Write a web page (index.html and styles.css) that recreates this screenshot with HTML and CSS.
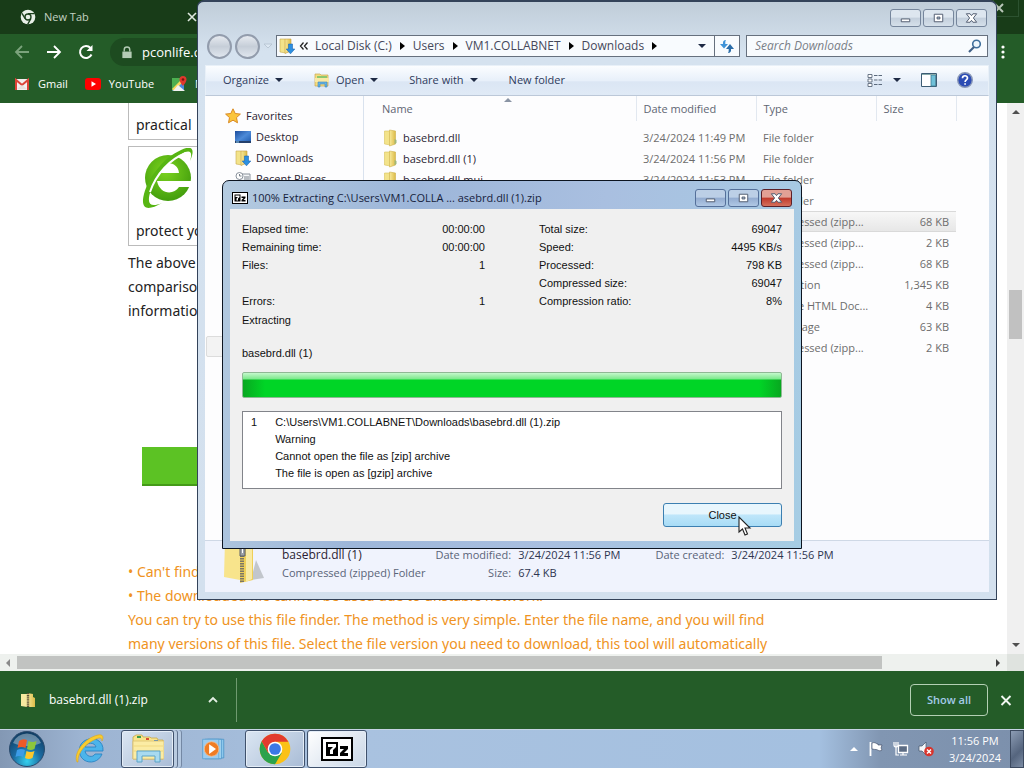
FILE: index.html
```
<!DOCTYPE html>
<html lang="en">
<head>
<meta charset="utf-8">
<title>Desktop</title>
<link rel="stylesheet" href="styles.css">
</head>
<body>
<svg class="defs" aria-hidden="true">
  <defs>
    <linearGradient id="gold" x1="0" x2="1"><stop offset="0" stop-color="#f8ea9c"/><stop offset="1" stop-color="#dcbb48"/></linearGradient>
    <linearGradient id="screen" x1="0" y1="0" x2="1" y2="1"><stop offset="0" stop-color="#1c4c9c"/><stop offset=".5" stop-color="#4c8ad8"/><stop offset="1" stop-color="#1d58ac"/></linearGradient>
    <radialGradient id="orb" cx=".5" cy=".85" r=".9"><stop offset="0" stop-color="#35d0ee"/><stop offset=".45" stop-color="#1b6aa0"/><stop offset="1" stop-color="#0d3558"/></radialGradient>
    <radialGradient id="lime" cx=".45" cy=".35" r=".7"><stop offset="0" stop-color="#7cd41e"/><stop offset="1" stop-color="#3f9a0c"/></radialGradient>
    <symbol id="folder" viewBox="0 0 16 18">
      <path d="M2 2h5l1 1v13l-6-1z" fill="#f3e38a" stroke="#d9c25c" stroke-width=".6"/>
      <path d="M7 1l6 1v13l-6 2z" fill="url(#gold)" stroke="#cdb04a" stroke-width=".6"/>
      <path d="M12 10l2 1v3l-2 1z" fill="#9fb87a"/>
    </symbol>
    <symbol id="downloads" viewBox="0 0 16 16">
      <path d="M1 1h5l1 1v13l-6-1z" fill="#f3e38a" stroke="#c9ab4c" stroke-width=".6"/>
      <path d="M6 1l6 0v12l-6 2.500z" fill="url(#gold)" stroke="#c9a040" stroke-width=".6"/>
      <path d="M9.500 6h4v5h2.300l-4.300 4.800L7.200 11h2.300z" fill="#2c8fe0" stroke="#1c66b4" stroke-width=".6"/>
    </symbol>
    <symbol id="zip" viewBox="0 0 16 16">
      <path d="M1 2h6v13l-6-1z" fill="#f7e9a0"/>
      <path d="M7 1l6 1v3l2 1v9H7z" fill="url(#gold)"/>
      <path d="M8 1v14" stroke="#5c5138" stroke-width="2.400" stroke-dasharray="1.300 .8"/>
    </symbol>
    <symbol id="sevenzip" viewBox="0 0 32 24">
      <path d="M0 0h32v24H0z"/>
      <path d="M2 2h28v20H2z" fill="#fff"/>
      <path d="M5 5h12v14H5z"/>
      <path d="M7 7h8v3l-3 3v4H9v-4l3-3H7z" fill="#fff"/>
      <path d="M19 9h8v3l-4 4h4v3h-8v-3l4-4h-4z"/>
    </symbol>
    <symbol id="min" viewBox="0 0 30 17"><path d="M10.500 9.500h9v3h-9z" fill="#fff" stroke="#4c586c"/></symbol>
    <symbol id="max" viewBox="0 0 30 17"><path d="M10.500 4.500h9v8h-9z" fill="#fff" stroke="#4c586c"/><path d="M13.500 7.500h3v2h-3z" fill="#b8c8da" stroke="#4c586c"/></symbol>
    <symbol id="shut" viewBox="0 0 30 17"><path d="M9.500 4h4L15 6l1.500-2h4l-3.500 4.500 3.500 4.500h-4L15 11l-1.500 2h-4L13 8.500z" fill="#fff" stroke="#4c586c"/></symbol>
    <symbol id="chrome" viewBox="0 0 48 48">
      <circle cx="24" cy="24" r="23" fill="#fbc116"/>
      <path d="M4.100 12.500A23 23 0 0 0 24 47l10-17-10-6-10 6z" fill="#2ba24c"/>
      <path d="M24 13h20a23 23 0 0 0-40-.5L14 30z" fill="#e23b2e"/>
      <circle cx="24" cy="24" r="11" fill="#fff"/><circle cx="24" cy="24" r="8.800" fill="#3b78e7"/>
    </symbol>
  </defs>
</svg>

<div class="desktop">
  <main class="browser">
    <header class="tabs">
      <div class="tab">
        <svg class="i16" viewBox="0 0 48 48"><circle cx="24" cy="24" r="22" fill="#e8f0e8"/><circle cx="24" cy="24" r="9" fill="none" stroke="#1c401d" stroke-width="4"/><path d="M24 14h20M15.500 29L6 13M32.500 29L23 46" stroke="#1c401d" stroke-width="4"/></svg>
        <span>New Tab</span>
        <button class="plain" aria-label="Close tab"><svg class="i10" viewBox="0 0 10 10"><path d="M1 1l8 8M9 1L1 9" stroke="#dfe8df" stroke-width="1.600"/></svg></button>
      </div>
      <button class="plain quit" aria-label="Close browser"><svg class="i10" viewBox="0 0 10 10"><path d="M1 1l8 8M9 1L1 9" stroke="#b9c6b9" stroke-width="2"/></svg></button>
    </header>
    <div class="toolbar">
      <button class="plain" aria-label="Back"><svg class="i16" viewBox="0 0 16 16"><path d="M15 8H2M8 2L2 8l6 6" fill="none" stroke="#7ba37c" stroke-width="1.800"/></svg></button>
      <button class="plain" aria-label="Forward"><svg class="i16" viewBox="0 0 16 16"><path d="M1 8h13M8 2l6 6-6 6" fill="none" stroke="#fff" stroke-width="1.800"/></svg></button>
      <button class="plain" aria-label="Reload"><svg class="i16" viewBox="0 0 16 16"><path d="M13.500 10.500A6 6 0 1 1 12.500 4" fill="none" stroke="#fff" stroke-width="2"/><path d="M14.500 1v6h-6z" fill="#fff"/></svg></button>
      <div class="omnibox">
        <svg class="i12" viewBox="0 0 12 14"><path d="M3 6V4a3 3 0 0 1 6 0v2" fill="none" stroke="#b4cbb5" stroke-width="1.500"/><path d="M1 6h10v7H1z" fill="#b4cbb5"/></svg>
        <input type="text" aria-label="Address" value="pconlife.com">
      </div>
      <button class="plain kebab" aria-label="Menu"><svg viewBox="0 0 4 14"><circle cx="2" cy="2" r="1.600"/><circle cx="2" cy="7" r="1.600"/><circle cx="2" cy="12" r="1.600"/></svg></button>
    </div>
    <nav class="bookmarks">
      <a href="#"><svg class="i16" viewBox="0 0 16 16"><path d="M1 3h14v11H1z" fill="#f4efee"/><path d="M2 14V4l6 5 6-5v10" fill="none" stroke="#dc4437" stroke-width="2"/><path d="M3 13l5-4 5 4z" fill="#e8e0dd"/></svg>Gmail</a>
      <a href="#"><svg class="i16" viewBox="0 0 16 16"><rect y="2" width="16" height="12" rx="3" fill="#f00"/><path d="M6.500 5.200L11 8l-4.500 2.800z" fill="#fff"/></svg>YouTube</a>
      <a href="#"><svg class="i16" viewBox="0 0 16 16"><path d="M1 2h12v13H1z" fill="#4caf50"/><path d="M1 15L13 3v12z" fill="#4a89dc"/><path d="M1 13L12 2l2 2L3 15z" fill="#f8d75c"/><path d="M7 9l7 6H2z" fill="#f2f2f2"/><path d="M12 0a3.500 3.500 0 0 1 3.500 3.500C15.500 6 12 10 12 10S8.500 6 8.500 3.500A3.500 3.500 0 0 1 12 0z" fill="#e0382c"/><circle cx="12" cy="3.500" r="1.300" fill="#7c1510"/></svg>Maps</a>
    </nav>
    <div class="view">
      <article class="page">
        <div class="card first">practical</div>
        <div class="card">
          <svg class="logo" viewBox="0 0 52 60">
            <circle cx="26" cy="30" r="23" fill="url(#lime)"/>
            <path d="M15 25c2-13 21-13 22 0z" fill="#fff"/>
            <path d="M15 33h35v6H37c-5 8-19 8-22-6z" fill="#fff"/>
            <path d="M2 46C-2 62 6 63 20 55 8 60 4 56 9 42 17 22 33 9 43 4c7-2 7 2 5 9C54 0 49-3 39 2 21 10 7 29 2 46z" fill="#57b513"/>
            <path d="M8 44C14 26 28 11 44 5" fill="none" stroke="#fff" stroke-width="2"/>
          </svg>
          <span>protect your</span>
        </div>
        <p>The above<br>comparison<br>information</p>
        <div class="cta"></div>
        <p class="tips">• Can't find the file<br>• The downloaded file cannot be used due to unstable network.<br>You can try to use this file finder. The method is very simple. Enter the file name, and you will find<br>many versions of this file. Select the file version you need to download, this tool will automatically</p>
      </article>
      <div class="vscroll">
        <svg class="i10" viewBox="0 0 10 10"><path d="M1 7l4-4 4 4z" fill="#505050"/></svg>
        <div class="vtrack"><div class="vthumb"></div></div>
        <svg class="i10" viewBox="0 0 10 10"><path d="M1 3l4 4 4-4z" fill="#505050"/></svg>
      </div>
    </div>
    <div class="hscroll">
      <svg class="i10" viewBox="0 0 10 10"><path d="M7 1L3 5l4 4z" fill="#8a8a8a"/></svg>
      <div class="htrack"><div class="hthumb"></div></div>
      <svg class="i10" viewBox="0 0 10 10"><path d="M3 1l4 4-4 4z" fill="#404040"/></svg>
      <div class="corner"></div>
    </div>
    <footer class="shelf">
      <button class="plain item">
        <svg class="i16"><use href="#zip"/></svg>
        <span>basebrd.dll (1).zip</span>
        <svg class="i10" viewBox="0 0 10 10"><path d="M1 7l4-4 4 4" fill="none" stroke="#e4efe4" stroke-width="1.800"/></svg>
      </button>
      <button class="showall">Show all</button>
      <button class="plain" aria-label="Close downloads bar"><svg class="i12" viewBox="0 0 12 12"><path d="M1.500 1.500l9 9M10.500 1.500l-9 9" stroke="#f2f7f2" stroke-width="1.900"/></svg></button>
    </footer>
  </main>

  <section class="explorer" aria-label="Downloads">
    <div class="caption">
      <button aria-label="Minimize"><svg><use href="#min"/></svg></button>
      <button aria-label="Maximize"><svg><use href="#max"/></svg></button>
      <button aria-label="Close"><svg><use href="#shut"/></svg></button>
    </div>
    <div class="navrow">
      <button class="round" aria-label="Back"></button>
      <button class="round" aria-label="Forward"></button>
      <svg class="i10" viewBox="0 0 10 10"><path d="M1 3h8L5 7z" fill="#dde8f3" stroke="#b3c0ce" stroke-width=".8"/></svg>
      <div class="crumbs">
        <svg class="i16"><use href="#downloads"/></svg>
        <svg class="i10" viewBox="0 0 10 10"><path d="M4.500 1.500L1.500 5l3 3.500M8.500 1.500L5.500 5l3 3.500" fill="none" stroke="#222" stroke-width="1.300"/></svg>
        <a href="#">Local Disk (C:)</a><i></i>
        <a href="#">Users</a><i></i>
        <a href="#">VM1.COLLABNET</a><i></i>
        <a href="#">Downloads</a><i></i>
        <b class="down"></b>
        <button class="refresh" aria-label="Refresh"><svg class="i16" viewBox="0 0 16 16"><path d="M6.500 2C3.500 2.500 4 5 4 6H1l4 4.500L9 6H6.300c0-2 0-3 .7-4z" fill="#3f93d8"/><path d="M9.500 15c3-.5 2.500-3 2.500-4h3L11 6l-4 5h2.700c0 2 0 3-.7 4z" fill="#2a6ca8"/></svg></button>
      </div>
      <div class="search">
        <input type="text" aria-label="Search" placeholder="Search Downloads">
        <svg class="i14" viewBox="0 0 14 14"><circle cx="8.500" cy="5" r="3.800" fill="#eef6fc" stroke="#3f6f9c" stroke-width="1.600"/><path d="M6 8l-5 5" stroke="#3f5f86" stroke-width="2.200"/></svg>
      </div>
    </div>
    <div class="commands">
      <button>Organize<b class="down"></b></button>
      <button><svg class="i16" viewBox="0 0 16 16"><path d="M1 2h5l1 1h7v11H1z" fill="#f5dd80" stroke="#c9a850" stroke-width=".7"/><path d="M3 4h10v4H3z" fill="#8cc870"/><path d="M1 6h14v4H1z" fill="#f9e9a4"/><path d="M4 15v-5h9v5h-2v-3H6v3z" fill="#64b4e4" stroke="#3c84b8" stroke-width=".6"/></svg>Open<b class="down"></b></button>
      <button>Share with<b class="down"></b></button>
      <button>New folder</button>
      <button class="views" aria-label="Change view"><svg class="i16" viewBox="0 0 16 14"><path d="M1 1.500h4v3H1zM1 6h4v3H1zM1 10.500h4v3H1z" fill="#fff" stroke="#5c6a7c" stroke-width=".9"/><path d="M7 2.500h9M7 7h9M7 11.500h9" stroke="#5c6a7c" stroke-dasharray="3.500 1"/></svg><b class="down"></b></button>
      <button aria-label="Preview pane"><svg class="i16" viewBox="0 0 16 14"><path d="M.5.500h15v13H.5z" fill="#fff" stroke="#3c5c74"/><path d="M10 2h4.500v11H10z" fill="#6fc0d8" stroke="#3c7c94" stroke-width=".8"/><path d="M1 1.500h14" stroke="#8aa"/></svg></button>
      <button aria-label="Help"><svg class="i16" viewBox="0 0 16 16"><circle cx="8" cy="8" r="7.300" fill="#2c4cb4" stroke="#8a98b8" stroke-width="1.400"/><path d="M5.500 6.200C5.500 3 10.500 3 10.500 6c0 2-2.400 1.800-2.400 4M8.100 11.200v1.600" fill="none" stroke="#fff" stroke-width="1.700"/></svg></button>
    </div>
    <div class="body">
      <nav class="tree">
        <a href="#" class="root"><svg class="i16" viewBox="0 0 16 16"><path d="M8 .8l2.200 4.700 5.200.6-3.900 3.500 1 5.200L8 12.200l-4.500 2.600 1-5.200L.6 6.100l5.200-.6z" fill="#fbc53c" stroke="#d98a24"/></svg>Favorites</a>
        <a href="#"><svg class="i16" viewBox="0 0 16 16"><path d="M0 2h16v12H0z" fill="url(#screen)"/><path d="M0 12h16v2H0z" fill="#24406c"/><path d="M1 13h3" stroke="#8fd0f4"/></svg>Desktop</a>
        <a href="#"><svg class="i16"><use href="#downloads"/></svg>Downloads</a>
        <a href="#"><svg class="i16" viewBox="0 0 16 16"><path d="M5 3h10v10H5z" fill="#f4f6f8" stroke="#8a929c"/><circle cx="4.500" cy="5" r="3.500" fill="#fff" stroke="#8a929c"/><path d="M4.500 3v2h2M9 6h5M9 8h5" fill="none" stroke="#7a828c"/></svg>Recent Places</a>
        <a href="#" class="current" aria-label="Computer"></a>
      </nav>
      <div class="files">
        <table>
          <thead><tr><th class="sorted">Name</th><th>Date modified</th><th>Type</th><th>Size</th><th aria-label="Spare"></th></tr></thead>
          <tbody>
            <tr><td><svg><use href="#folder"/></svg>basebrd.dll</td><td>3/24/2024 11:49 PM</td><td>File folder</td><td></td></tr>
            <tr><td><svg><use href="#folder"/></svg>basebrd.dll (1)</td><td>3/24/2024 11:56 PM</td><td>File folder</td><td></td></tr>
            <tr><td><svg><use href="#folder"/></svg>basebrd.dll.mui</td><td>3/24/2024 11:53 PM</td><td>File folder</td><td></td></tr>
            <tr><td></td><td></td><td>File folder</td><td></td></tr>
            <tr class="picked"><td></td><td></td><td>Compressed (zipp...</td><td>68 KB</td></tr>
            <tr><td></td><td></td><td>Compressed (zipp...</td><td>2 KB</td></tr>
            <tr><td></td><td></td><td>Compressed (zipp...</td><td>68 KB</td></tr>
            <tr><td></td><td></td><td>Application</td><td>1,345 KB</td></tr>
            <tr><td></td><td></td><td>Chrome HTML Doc...</td><td>4 KB</td></tr>
            <tr><td></td><td></td><td>PNG image</td><td>63 KB</td></tr>
            <tr><td></td><td></td><td>Compressed (zipp...</td><td>2 KB</td></tr>
          </tbody>
        </table>
      </div>
    </div>
    <div class="details">
      <svg class="bigzip" viewBox="0 0 42 48">
        <path d="M28 44l13-2-8-18z" fill="#c2c6cc"/>
        <path d="M2 4l15-2v42L1 41z" fill="#f8e48c"/><path d="M17 2l13 3v39l-13 3z" fill="#efcf58"/><path d="M23 3l6 2v38l-6 3z" fill="#f9eaa4"/>
        <path d="M19 2v44" stroke="#7c7664" stroke-width="4" stroke-dasharray="1.500 1"/>
        <path d="M17 2h5v18h-5z" fill="#9ca0a6" stroke="#5c6068"/><path d="M19.500 9v8" stroke="#fff"/>
      </svg>
      <div class="what"><strong>basebrd.dll (1)</strong><span>Compressed (zipped) Folder</span></div>
      <dl><dt>Date modified:</dt><dd>3/24/2024 11:56 PM</dd><dt>Size:</dt><dd>67.4 KB</dd></dl>
      <dl><dt>Date created:</dt><dd>3/24/2024 11:56 PM</dd></dl>
    </div>
  </section>

  <section class="dialog" role="dialog" aria-labelledby="dlg">
    <div class="dtitle">
      <svg class="i16" viewBox="0 0 32 24" preserveAspectRatio="none"><use href="#sevenzip"/></svg>
      <h1 id="dlg">100% Extracting C:\Users\VM1.COLLA ... asebrd.dll (1).zip</h1>
      <div class="caption">
        <button aria-label="Minimize"><svg><use href="#min"/></svg></button>
        <button aria-label="Maximize"><svg><use href="#max"/></svg></button>
        <button class="red" aria-label="Close window"><svg><use href="#shut"/></svg></button>
      </div>
    </div>
    <div class="client">
      <div class="stats">
        <dl><dt>Elapsed time:</dt><dd>00:00:00</dd><dt>Remaining time:</dt><dd>00:00:00</dd><dt>Files:</dt><dd>1</dd><dt class="gap">Errors:</dt><dd class="gap">1</dd></dl>
        <dl><dt>Total size:</dt><dd>69047</dd><dt>Speed:</dt><dd>4495 KB/s</dd><dt>Processed:</dt><dd>798 KB</dd><dt>Compressed size:</dt><dd>69047</dd><dt>Compression ratio:</dt><dd>8%</dd></dl>
      </div>
      <p class="stage">Extracting</p>
      <p class="file" id="cur">basebrd.dll (1)</p>
      <div class="meter" role="progressbar" aria-labelledby="cur" aria-valuenow="100"></div>
      <ol class="log">
        <li><span>1</span><span>C:\Users\VM1.COLLABNET\Downloads\basebrd.dll (1).zip<br>Warning<br>Cannot open the file as [zip] archive<br>The file is open as [gzip] archive</span></li>
      </ol>
      <button class="close">Close
        <svg class="cursor" viewBox="0 0 14 20"><path d="M1 1v15l3.500-3 2.500 6 2.500-1-2.500-6h5z" fill="#fff" stroke="#222" stroke-width="1.100"/></svg>
      </button>
    </div>
  </section>

  <footer class="taskbar">
    <button class="start" aria-label="Start"><svg viewBox="0 0 36 36"><circle cx="18" cy="18" r="17.500" fill="url(#orb)" stroke="#2a4a6c"/><path d="M4 12a15 15 0 0 1 28 0c-8 4-20 4-28 0z" fill="#fff" opacity=".35"/><path d="M10 10q4-3 8-1l-1.500 8q-4-2-8 0z" fill="#ee5a28"/><path d="M19.500 10q4 2 8 0l-2 8q-4 2-7.500 0z" fill="#8cc63c"/><path d="M8 19q4-2 8 0l-2 7q-4-2-7.500 0z" fill="#3c9ce8"/><path d="M17.500 20q4 2 8 0l-2 7q-4 2-7.500 0z" fill="#fcc72c"/></svg></button>
    <button class="task ie" aria-label="Internet Explorer"><svg viewBox="0 0 32 32"><path d="M29 18H11c1 6 8 7 10 3h7c-3 8-12 10-18 6-7-5-6-17 2-20 8-4 18 1 17 11zM11 14h11c-1-5-10-5-11 0z" fill="#4cb4ea" stroke="#2a84c4" stroke-width=".9"/><path d="M3 29C-1 21 10 5 24 2c5-1 6 2 4 6 0-3-2-4-6-2C12 10 3 20 4 29z" fill="#f8cc30" stroke="#dca41c" stroke-width=".6"/></svg></button>
    <button class="task open stack" aria-label="Windows Explorer"><svg viewBox="0 0 32 32"><path d="M1 4l3-2h6l1 2h7l1 1h6l1 2h5v19H1z" fill="#f8e48c" stroke="#c8a848" stroke-width=".8"/><path d="M5 3h4v2H5z" fill="#3c9c4c"/><path d="M14 5h3v2h-3z" fill="#d84c34"/><path d="M22 7h4v2h-4z" fill="#3c80c8"/><path d="M1 8h31v18H1z" fill="#fbeca4" stroke="#dcc070" stroke-width=".8"/><path d="M1 13h30M1 18h30" stroke="#efd880"/><path d="M5 29V18h23v11h-5v-6H10v6z" fill="#a8daf0" stroke="#5ca4c8"/></svg></button>
    <button class="task wmp" aria-label="Media Player"><svg viewBox="0 0 32 32"><path d="M8 4h20v23H8z" fill="#8cc8ec" stroke="#4c94c8"/><path d="M5 4h20v24H5z" fill="#b0dcf4" stroke="#4c94c8"/><path d="M2 4h20v24H2z" fill="#9cccf0" stroke="#5ca0d0"/><circle cx="13" cy="16" r="9" fill="#f07c24" stroke="#f8c090"/><path d="M10 10l8.500 6-8.500 6z" fill="#fff"/></svg></button>
    <button class="task open" aria-label="Chrome"><svg><use href="#chrome"/></svg></button>
    <button class="task open bright" aria-label="7-Zip"><svg><use href="#sevenzip"/></svg></button>
    <div class="tray">
      <svg class="i10" viewBox="0 0 10 10"><path d="M1 7l4-4 4 4z" fill="#fff"/></svg>
      <svg class="i16" viewBox="0 0 16 16"><path d="M2.500 1v14" stroke="#fff" stroke-width="1.800"/><path d="M4 2c3-1.500 4 1 6 1v1h4l-1 3 1 2c-3 2-4-.5-6-.5S5 8 4 8z" fill="#fff" stroke="#35425c" stroke-width=".6"/></svg>
      <svg class="i16" viewBox="0 0 16 16"><path d="M5.500 4.500h9v7h-9z" fill="#5c6c84" stroke="#fff" stroke-width="1.300"/><path d="M7 14h7M10 12v2M3 6v8h3M1 1v3c0 3 4 3 4 0V1M3 1v5" fill="none" stroke="#fff" stroke-width="1.200"/></svg>
      <svg class="i16" viewBox="0 0 16 16"><path d="M1 5h3l4-4v13l-4-4H1z" fill="#f4f6f8" stroke="#44546c" stroke-width=".7"/><circle cx="11" cy="10.500" r="4.800" fill="#d8342c"/><path d="M9 8.500l4 4M13 8.500l-4 4" stroke="#fff" stroke-width="1.500"/></svg>
      <time>11:56 PM<br>3/24/2024</time>
      <button class="peek" aria-label="Show desktop"></button>
    </div>
  </footer>
</div>
</body>
</html>
```
FILE: styles.css
```
* { box-sizing: border-box; }
body { margin: 0; font: 11px/16px "Open Sans", "Noto Sans", sans-serif; color: #222; }
button, input { font: inherit; color: inherit; }
a { color: inherit; text-decoration: none; }
dl, dd, p, h1, ol { margin: 0; padding: 0; font: inherit; }
svg { flex: none; display: block; }
.defs { position: absolute; width: 0; height: 0; }
.i10 { width: 10px; height: 10px; }
.i12 { width: 12px; height: 13px; }
.i14 { width: 14px; height: 14px; }
.i16 { width: 16px; height: 16px; }
.plain { border: 0; padding: 0; background: none; display: flex; align-items: center; }
.down { border: 4px solid transparent; border-top-color: #1e2a44; border-bottom: 0; }

.desktop { position: relative; display: flex; flex-direction: column; height: 100vh; overflow: hidden; white-space: nowrap; }
.browser { flex: 1; min-height: 0; display: flex; flex-direction: column; background: #fff; color: #fff; }
.tabs { display: flex; justify-content: space-between; align-items: flex-start; height: 34px; background: #183c18; color: #c3d2c3; }
.tab { display: flex; align-items: center; gap: 8px; width: 197px; height: 34px; padding-left: 20px; }
.tab span { flex: 1; }
.quit { width: 26px; height: 17px; border: 1px solid #2c5230; border-top: 0; margin-right: 5px; }
.toolbar { display: flex; align-items: center; gap: 16px; height: 36px; padding: 0 19px 0 14px; background: #245c28; }
.omnibox { flex: 1; display: flex; align-items: center; gap: 9px; height: 28px; padding-left: 11px; border-radius: 14px; background: #1d4b20; }
.omnibox input { flex: 1; border: 0; background: none; font-size: 13px; padding: 0; }
.kebab svg { width: 4px; height: 14px; fill: #fff; }
.bookmarks { display: flex; align-items: center; gap: 17px; height: 33px; padding: 0 14px 5px; background: #245c28; }
.bookmarks a { display: flex; align-items: center; gap: 8px; }

.view { flex: 1; min-height: 0; display: flex; overflow: hidden; }
.page { flex: 1; padding-left: 128px; color: #222; font: 14px/24px "Noto Sans", sans-serif; }
.card { width: 240px; height: 100px; padding: 0 7px; border: 1px solid #bbb; display: flex; flex-direction: column; justify-content: space-between; margin-bottom: 5px; }
.card.first { height: 37px; border-top: 0; padding-top: 10px; margin-bottom: 6px; }
.card .logo { width: 52px; height: 60px; margin: 1px 0 0 6px; }
.card span { padding-bottom: 2px; }
.cta { width: 240px; height: 39px; margin: 124px 0 74px 14px; background: #5cc224; border-bottom: 2px solid #449a18; }
.tips { color: #ef9322; }
.vscroll { width: 17px; display: flex; flex-direction: column; align-items: center; gap: 4px; padding: 4px 0; background: #f0f0f0; }
.vtrack { flex: 1; width: 13px; padding-top: 169px; }
.vthumb { height: 49px; background: #c1c1c1; }
.hscroll { display: flex; align-items: center; gap: 4px; height: 17px; padding-left: 3px; background: #eef1ee; }
.htrack { flex: 1; }
.hthumb { width: 89%; height: 13px; background: #c1c3c1; }
.corner { width: 17px; height: 17px; background: #dfe3df; }
.shelf { display: flex; align-items: center; gap: 12px; height: 58px; padding-right: 12px; background: #245c28; }
.shelf .item { width: 237px; height: 44px; padding: 0 18px 0 20px; gap: 13px; border-right: 1px solid #6f9a70; text-align: left; font-size: 12px; }
.item span { flex: 1; }
.showall { margin-left: auto; width: 78px; height: 32px; border: 1px solid #b4d0b4; border-radius: 4px; background: none; color: #a4cbe8; font-weight: 600; padding: 0; }

.explorer { position: absolute; left: 197px; right: 27px; top: 0; bottom: 168px; display: flex; flex-direction: column; padding: 0 7px 7px; border: 1px solid #34435a; border-top-width: 2px; border-radius: 7px 7px 0 0; background: linear-gradient(#c0cdd9, #d5e2ef 50px, #d3e0ee); color: #45485a; }
.caption { display: flex; justify-content: flex-end; gap: 2px; }
.caption button { width: 31px; height: 18px; padding: 0; border: 1px solid #76869c; border-radius: 3px; background: linear-gradient(#dde6ef 45%, #c3cfdc 50%, #d5e0ea); }
.caption svg { width: 29px; height: 16px; }
.explorer .caption { padding: 7px 2px 7px; }
.navrow { display: flex; align-items: center; gap: 3px; height: 24px; margin-bottom: 7px; padding: 0 1px 0 2px; }
.round { width: 25px; height: 25px; flex: none; border: 2px solid #929cac; border-radius: 50%; background: linear-gradient(#e6eaf0, #c6ced8 50%, #e0e6ee); }
.crumbs { flex: 1; display: flex; align-items: center; gap: 8px; height: 22px; padding-left: 2px; border: 1px solid #66707e; background: #f8fbfe; font-size: 12px; }
.crumbs > .i16 { margin-right: -4px; }
.crumbs > .i10 { margin-right: -2px; }
.crumbs i { border: 4px solid transparent; border-left: 5px solid #000; border-right: 0; }
.crumbs b { margin-left: auto; }
.refresh { width: 25px; height: 20px; padding: 0 4px; border: 0; border-left: 1px solid #66707e; background: none; }
.search { width: 31%; display: flex; align-items: center; height: 22px; padding: 0 5px 0 8px; margin-left: 3px; border: 1px solid #66707e; background: #f8fbfe; }
.search input { flex: 1; min-width: 0; border: 0; padding: 0; background: none; font-size: 12px; font-style: italic; }
.search input::placeholder { color: #7a7f88; }
.commands { display: flex; align-items: center; gap: 31px; height: 31px; padding: 0 15px 1px 17px; border: 1px solid #e8f0f8; border-bottom-color: #bcc8d8; background: linear-gradient(#fbfdff, #e8f0fa 50%, #dbe6f4 55%, #e0eaf6); color: #2e3b5c; }
.commands button { display: flex; align-items: center; gap: 6px; padding: 0; border: 0; background: none; }
.commands .views { margin-left: auto; gap: 10px; }
.commands .views ~ button { margin-left: -11px; }
.body { flex: 1; min-height: 0; display: flex; background: #fdfdfe; }
.tree { width: 159px; padding-top: 9px; border-right: 1px solid #d9e2ee; color: #2b1d33; }
.tree a { display: flex; align-items: center; gap: 5px; height: 21px; padding-left: 30px; }
.tree a.root { padding-left: 20px; }
.tree .current { height: 21px; margin: 147px 4px 0 1px; border: 1px solid #dcdcdc; border-radius: 2px; background: #f3f3f3; }
.files { flex: 1; padding-left: 8px; overflow: hidden; }
table { width: 100%; table-layout: fixed; border-collapse: collapse; color: #6d6d6d; }
th { height: 25px; padding: 0 7px; text-align: left; font-weight: 400; color: #5f6673; border-right: 1px solid #e2e8f0; }
th:nth-child(1) { width: 264px; padding-left: 10px; }
th:nth-child(2), th:nth-child(3) { width: 120px; }
th:nth-child(4) { width: 80px; }
th:last-child { border: 0; }
.sorted { position: relative; }
.sorted::after { content: ""; position: absolute; left: 50%; top: 2px; border: 4px solid transparent; border-top: 0; border-bottom-color: #8a94a4; }
tbody::before { content: ""; display: block; height: 6px; }
td { height: 21px; padding: 0 7px; line-height: 19px; }
td:first-child { display: flex; align-items: center; gap: 4px; padding-left: 10px; color: #2b1d33; }
td svg { width: 17px; height: 18px; }
td:nth-child(4) { text-align: right; }
.picked td { background: linear-gradient(#f8f8f8, #e6e6e6); box-shadow: 0 -1px #d9d9d9 inset, 0 1px #d9d9d9 inset; }
.details { display: flex; gap: 10px; height: 52px; padding: 5px 18px; background: #f0f3fd; border-top: 1px solid #cfd8e6; color: #5a6478; line-height: 18px; }
.bigzip { width: 42px; height: 48px; margin: -10px 7px 0 0; }
.what { display: grid; align-content: start; }
.what strong { font-size: 12px; font-weight: 400; color: #2b1d33; }
.details dl { display: grid; grid-template-columns: auto auto; column-gap: 7px; margin-right: 25px; align-content: start; }
.details dt { text-align: right; }
.details dd { color: #2e3550; }

.dialog { position: absolute; left: 222px; top: 180px; width: 580px; padding: 0 7px 7px; border: 1px solid #0c1420; border-radius: 7px 7px 0 0; background: linear-gradient(100deg, #b4cbe0, #9db6d9 30%, #a9bfe0 60%, #a6cde4); color: #111; }
.dtitle { display: flex; align-items: center; gap: 4px; height: 28px; padding: 6px 2px 0 2px; color: #16223c; }
.dtitle > .i16 { height: 12px; }
.dtitle h1 { flex: 1; }
.dtitle .caption button { border-color: #55709a; background: linear-gradient(#bccfe6 45%, #93acd0 50%, #b0c8e4); }
.dtitle .caption .red { border-color: #5c2028; background: linear-gradient(#e2a095 45%, #c0392b 50%, #d4705c); }
.client { display: flex; flex-direction: column; padding: 11px 12px 14px; background: #f0f0f0; font: 11px/18px "Liberation Sans", Arial, sans-serif; }
.stats { display: grid; grid-template-columns: 1fr 1fr; column-gap: 54px; }
.stats dl { display: grid; grid-template-columns: auto auto; align-content: start; }
.stats dd { text-align: right; }
.gap { padding-top: 18px; }
.stage { margin-top: 1px; }
.file { margin: 15px 0 10px; }
.meter { height: 26px; border: 1px solid #8fb894; border-radius: 2px; background: linear-gradient(#c4f8cc, #7ce88c 6px, transparent 7px), linear-gradient(90deg, #08a820, #00d526 22px calc(100% - 22px), #08a820); }
.log { list-style: none; height: 78px; margin: 13px 0 14px; padding: 2px 8px; border: 1px solid #82848a; background: #fff; line-height: 17px; }
.log li { display: flex; gap: 18px; }
.close { position: relative; align-self: flex-end; width: 119px; height: 24px; padding: 0; border: 1px solid #3c7fb1; border-radius: 3px; background: linear-gradient(#e8f6fd 45%, #bfe6fa 50%, #a8dcf6); }
.cursor { position: absolute; left: 74px; top: 12px; width: 14px; height: 20px; }

.taskbar { display: flex; align-items: center; height: 39px; padding-left: 9px; border-top: 1px solid #c6d4e4; background: linear-gradient(90deg, #8398b4, #9db4d2 8%, #a9c2e0 35%, #a4c0e0 80%, #8196b2 86%, #7c90ac); }
.start, .task { padding: 0; border: 0; background: none; display: flex; align-items: center; justify-content: center; }
.start svg { width: 36px; height: 36px; }
.task { width: 60px; height: 38px; margin-right: 2px; border-radius: 3px; }
.task svg { width: 32px; height: 32px; }
.ie { width: 74px; padding-left: 16px; }
.open { border: 1px solid #3f516c; background: linear-gradient(135deg, #dbe6f2, #a9bcd6); box-shadow: 0 0 0 1px #e4edf7 inset; }
.stack { width: 53px; box-shadow: 0 0 0 1px #e4edf7 inset, 3px 0 #b9cbe0, 4px 0 #5f728e, 7px 0 #b4c8e0, 8px 0 #7488a4; }
.wmp { width: 67px; padding-left: 8px; }
.wmp svg { width: 28px; height: 26px; }
.bright { background: linear-gradient(135deg, #fff, #c8d6e6); }
.tray { margin-left: auto; height: 38px; display: flex; align-items: center; gap: 9px; color: #fff; }
.tray time { margin-left: 6px; text-align: center; line-height: 17px; }
.peek { width: 14px; height: 38px; padding: 0; border: 1px solid #3c4a60; background: linear-gradient(135deg, #8c9cb4, #55657e 60%, #7c8ca4); }
```
